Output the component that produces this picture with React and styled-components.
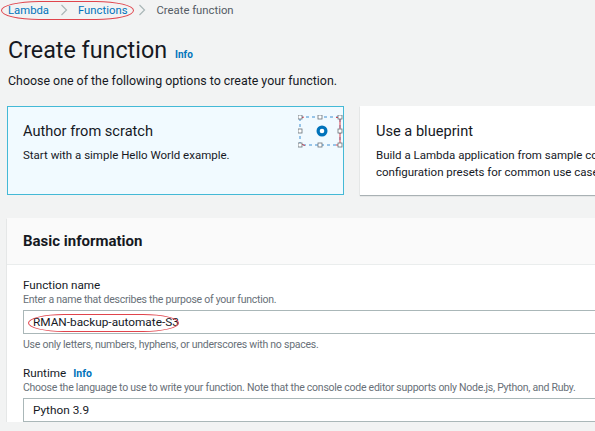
import React from 'react';
import styled, { createGlobalStyle } from 'styled-components';

const GlobalStyle = createGlobalStyle`
  html, body {
    margin: 0;
    padding: 0;
    background: #f2f3f3;
    overflow: hidden;
  }
  * { box-sizing: border-box; }
`;

const Page = styled.div`
  width: 1100px;
  padding: 0 0 0 7px;
  font-family: Roboto, 'Liberation Sans', sans-serif;
  color: #16191f;
`;

const Crumbs = styled.nav`
  position: relative;
  display: flex;
  align-items: center;
  gap: 10.5px;
  height: 20px;
  padding-left: 1px;
  font-size: 11.3px;
`;

const Crumb = styled.span`
  color: ${(p) => (p.current ? '#545b64' : '#0073bb')};
`;

const Chevron = styled.svg`
  display: block;
`;

const Annotation = styled.div`
  position: absolute;
  border: 1px solid #e0444c;
  border-radius: 40px / 10px;
`;

const TitleRow = styled.div`
  display: flex;
  align-items: baseline;
  gap: 8px;
  margin-top: 16px;
  padding-left: 1px;
  height: 28px;
`;

const Title = styled.h1`
  margin: 0;
  font-size: 23.3px;
  font-weight: 400;
  line-height: 28px;
`;

const Info = styled.span`
  color: #0073bb;
  font-weight: 700;
  font-size: ${(p) => p.size || 10}px;
`;

const Subtitle = styled.p`
  margin: 8px 0 0 1px;
  font-size: 12.4px;
  line-height: 18px;
`;

const Cards = styled.div`
  display: grid;
  grid-template-columns: repeat(2, 337px);
  gap: 16px;
  margin-top: 16px;
`;

const Card = styled.div`
  position: relative;
  height: 89px;
  padding: 14px 15px;
  background: ${(p) => (p.selected ? '#f1faff' : '#fff')};
  border: 1px solid ${(p) => (p.selected ? '#44b9d6' : 'transparent')};
  box-shadow: ${(p) => (p.selected ? 'none' : '0 1px 1px rgba(0,28,36,0.3)')};
`;

const CardTitle = styled.div`
  font-size: 14.6px;
  line-height: 20px;
`;

const CardText = styled.div`
  margin-top: 6px;
  font-size: 11.5px;
  line-height: 17px;
  color: #16191f;
`;

const Select = styled.svg`
  position: absolute;
  top: 8px;
  right: -1px;
`;

const Panel = styled.section`
  margin-top: 23px;
  background: #fff;
  box-shadow: 0 1px 1px rgba(0,28,36,0.3);
`;

const PanelHeader = styled.div`
  height: 47px;
  display: flex;
  align-items: center;
  padding: 0 16px 1px;
  background: #fafafa;
  border-bottom: 1px solid #eaeded;
`;

const PanelTitle = styled.h2`
  margin: 0;
  font-size: 15px;
  font-weight: 700;
`;

const PanelBody = styled.div`
  padding: 12.5px 16px 0;
`;

const Field = styled.div`
  margin-bottom: ${(p) => p.gap || 0}px;
`;

const Label = styled.div`
  display: flex;
  align-items: baseline;
  gap: 7px;
  font-size: 11.7px;
  line-height: 15px;
`;

const Hint = styled.div`
  margin-top: ${(p) => p.top || 0}px;
  font-size: 10.5px;
  letter-spacing: -0.25px;
  line-height: 14px;
  color: #687078;
  white-space: nowrap;
`;

const InputBox = styled.div`
  position: relative;
  height: 24px;
  margin-top: 3px;
  padding: 0 9px;
  display: flex;
  align-items: center;
  font-size: 11.8px;
  background: #fff;
  border: 1px solid #aab7b8;
`;

function Arrow() {
  return (
    <Chevron width="8" height="12" viewBox="0 0 8 12">
      <path d="M1.5 1 L6.5 6 L1.5 11" fill="none" stroke="#aab7b8" strokeWidth="1.2" />
    </Chevron>
  );
}

function Handles() {
  const pts = [
    [2, 2], [22, 2], [42, 2],
    [2, 16], [42, 16],
    [2, 30], [22, 30], [42, 30],
  ];
  return (
    <Select width="46" height="34" viewBox="0 0 46 34">
      <rect x="2" y="2" width="40" height="28" fill="none" stroke="#3f8fd2" strokeDasharray="3 3" />
      <path d="M38 2.5 H42 V30 H38" fill="none" stroke="#e0444c" />
      <path d="M3 29 L7 30.5 M3 3 L6 2" stroke="#e0444c" />
      {pts.map(([x, y], i) => (
        <rect key={i} x={x - 2} y={y - 2} width="4" height="4" fill="#fff" stroke="#687078" strokeWidth="0.8" />
      ))}
      <circle cx="24" cy="16" r="5.5" fill="#0073bb" />
      <circle cx="24" cy="16" r="2.3" fill="#fff" />
    </Select>
  );
}

export default function App() {
  return (
    <>
      <GlobalStyle />
      <Page>
        <Crumbs>
          <Annotation style={{ left: -6, top: 1, width: 133, height: 19 }} />
          <Crumb>Lambda</Crumb>
          <Arrow />
          <Crumb>Functions</Crumb>
          <Arrow />
          <Crumb current>Create function</Crumb>
        </Crumbs>
        <TitleRow>
          <Title>Create function</Title>
          <Info>Info</Info>
        </TitleRow>
        <Subtitle>Choose one of the following options to create your function.</Subtitle>
        <Cards>
          <Card selected>
            <CardTitle>Author from scratch</CardTitle>
            <CardText>Start with a simple Hello World example.</CardText>
            <Handles />
          </Card>
          <Card>
            <CardTitle>Use a blueprint</CardTitle>
            <CardText>
              Build a Lambda application from sample code and configuration presets for common use cases.
            </CardText>
          </Card>
        </Cards>
        <Panel>
          <PanelHeader>
            <PanelTitle>Basic information</PanelTitle>
          </PanelHeader>
          <PanelBody>
            <Field gap={14}>
              <Label>Function name</Label>
              <Hint>Enter a name that describes the purpose of your function.</Hint>
              <InputBox>
                <Annotation style={{ left: 4, top: 3, width: 151, height: 18 }} />
                RMAN-backup-automate-S3
              </InputBox>
              <Hint top={4}>Use only letters, numbers, hyphens, or underscores with no spaces.</Hint>
            </Field>
            <Field>
              <Label>
                Runtime <Info size={10.5}>Info</Info>
              </Label>
              <Hint>
                Choose the language to use to write your function. Note that the console code editor supports only Node.js, Python, and Ruby.
              </Hint>
              <InputBox>Python 3.9</InputBox>
            </Field>
          </PanelBody>
        </Panel>
      </Page>
    </>
  );
}
